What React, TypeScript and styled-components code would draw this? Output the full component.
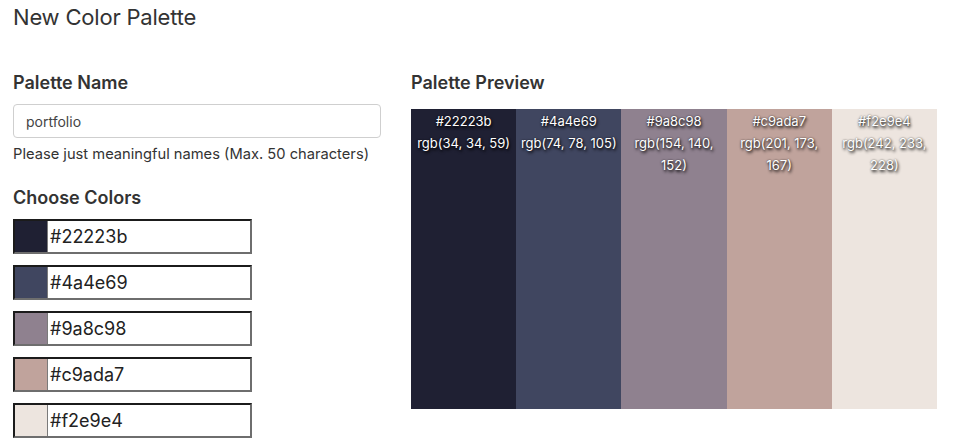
import React from "react";
import styled, { createGlobalStyle } from "styled-components";

const Global = createGlobalStyle`
  html, body { margin: 0; padding: 0; background: #ffffff; }
  body { font-family: Inter, "Noto Sans", sans-serif; color: #333333; }
  * { box-sizing: border-box; }
`;

const Page = styled.div`
  padding: 0 13px;
  width: 956px;
`;

const Title = styled.h1`
  margin: 0;
  padding-top: 4px;
  font-size: 22px;
  font-weight: 400;
  line-height: 26px;
  color: #333333;
  letter-spacing: -0.2px;
`;

const Columns = styled.div`
  display: grid;
  grid-template-columns: 368px 526px;
  column-gap: 30px;
  margin-top: 41px;
`;

const Column = styled.div`
  display: flex;
  flex-direction: column;
`;

const Heading = styled.h2<{ $top?: number }>`
  margin: ${(p) => p.$top ?? 0}px 0 0 0;
  font-size: 18px;
  font-weight: 600;
  line-height: 24px;
  color: #333333;
`;

const NameInput = styled.input`
  margin-top: 9px;
  height: 34px;
  width: 368px;
  border: 1px solid #cfcfcf;
  border-radius: 4px;
  padding: 0 12px;
  font-family: Inter, "Noto Sans", sans-serif;
  font-size: 14px;
  color: #444444;
  outline: none;
`;

const Help = styled.div`
  margin-top: 6px;
  font-size: 14.7px;
  line-height: 20px;
  color: #333333;
`;

const ColorList = styled.div`
  display: flex;
  flex-direction: column;
  gap: 11px;
  margin-top: 9px;
`;

const ColorRow = styled.div`
  display: flex;
  width: 239px;
  height: 35px;
  border: 2px solid;
  border-color: #1b1b1b #6e6e6e #6e6e6e #1b1b1b;
  background: #ffffff;
`;

const Swatch = styled.div<{ $color: string }>`
  width: 33px;
  flex: none;
  background: ${(p) => p.$color};
  border-right: 1px solid #7a7a7a;
`;

const HexText = styled.div`
  flex: 1;
  padding-left: 2px;
  display: flex;
  align-items: center;
  font-size: 18px;
  color: #222222;
`;

const Preview = styled.div`
  margin-top: 14px;
  display: grid;
  grid-template-columns: repeat(5, 1fr);
  height: 300px;
`;

const PreviewCell = styled.div<{ $color: string }>`
  background: ${(p) => p.$color};
  color: #ffffff;
  text-align: center;
  font-size: 13px;
  line-height: 22px;
  padding-top: 1px;
  text-shadow: 1px 2px 3px rgba(0, 0, 0, 0.95), 0 0 2px rgba(0, 0, 0, 0.6);
`;

const colors = [
  { hex: "#22223b", rgb: "rgb(34, 34, 59)", show: "#1f2033" },
  { hex: "#4a4e69", rgb: "rgb(74, 78, 105)", show: "#404660" },
  { hex: "#9a8c98", rgb: "rgb(154, 140, 152)", show: "#8f818f" },
  { hex: "#c9ada7", rgb: "rgb(201, 173, 167)", show: "#c0a39c" },
  { hex: "#f2e9e4", rgb: "rgb(242, 233, 228)", show: "#ede5df" },
];

export default function App() {
  return (
    <Page>
      <Global />
      <Title>New Color Palette</Title>
      <Columns>
        <Column>
          <Heading>Palette Name</Heading>
          <NameInput defaultValue="portfolio" />
          <Help>Please just meaningful names (Max. 50 characters)</Help>
          <Heading $top={22}>Choose Colors</Heading>
          <ColorList>
            {colors.map((c) => (
              <ColorRow key={c.hex}>
                <Swatch $color={c.show} />
                <HexText>{c.hex}</HexText>
              </ColorRow>
            ))}
          </ColorList>
        </Column>
        <Column>
          <Heading>Palette Preview</Heading>
          <Preview>
            {colors.map((c) => (
              <PreviewCell key={c.hex} $color={c.show}>
                {c.hex}
                <br />
                {c.rgb}
              </PreviewCell>
            ))}
          </Preview>
        </Column>
      </Columns>
    </Page>
  );
}
